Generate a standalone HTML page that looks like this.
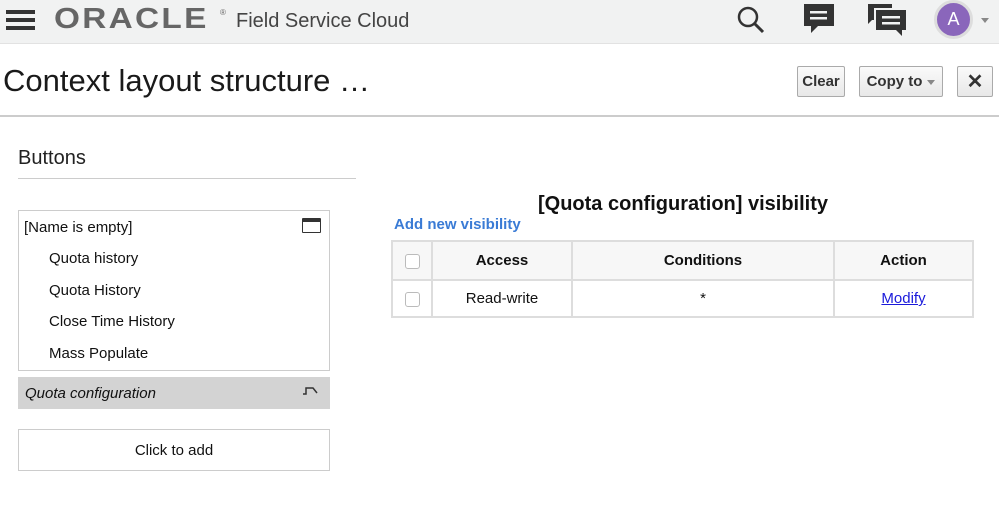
<!DOCTYPE html>
<html><head><meta charset="utf-8"><style>
*{margin:0;padding:0;box-sizing:border-box}
body{width:999px;height:520px;position:relative;background:#fff;font-family:"Liberation Sans",Arial,sans-serif;color:#111;overflow:hidden}
.a{position:absolute}
.hdr{left:0;top:0;width:999px;height:44px;background:#f1f2f2;border-bottom:1px solid #e2e2e2}
.btn{border:1px solid #aaa;border-radius:2px;background:linear-gradient(#fafafa,#e8e8e8);font-weight:bold;font-size:15px;color:#333;display:flex;align-items:center;justify-content:center}
.row{left:49px;font-size:15px}
table{border-collapse:collapse;font-size:15px}
td,th{border:2px solid #ddd;text-align:center}
th{background:#f7f7f7;height:39px}
td{height:37px}
.cb{display:inline-block;width:15px;height:15px;border:1px solid #bbb;border-radius:3px;background:#fff;vertical-align:middle}
</style></head><body>
<div class="a hdr"></div>
<div class="a" style="left:6px;top:10px;width:29px;height:4px;background:#333;box-shadow:0 8px 0 #333,0 16px 0 #333"></div>
<div class="a" style="left:54px;top:4px;font-size:29px;letter-spacing:2px;color:#666;font-weight:bold;transform:scaleX(1.15);transform-origin:left;line-height:30px">ORACLE</div>
<div class="a" style="left:220px;top:8px;font-size:8px;color:#666">®</div>
<div class="a" style="left:236px;top:10px;font-size:20px;color:#444">Field Service Cloud</div>
<svg class="a" style="left:735px;top:4px" width="32" height="32" viewBox="0 0 32 32"><circle cx="13" cy="13" r="9" fill="none" stroke="#333" stroke-width="2.5"/><line x1="19.5" y1="19.5" x2="28" y2="28" stroke="#333" stroke-width="3"/></svg>
<svg class="a" style="left:802px;top:2px" width="34" height="34" viewBox="0 0 34 34"><path d="M2 2h30v22H16l-7 7v-7H2z" fill="#333"/><rect x="8" y="9" width="17" height="2.5" fill="#f1f2f2"/><rect x="8" y="15" width="17" height="2.5" fill="#f1f2f2"/></svg>
<svg class="a" style="left:866px;top:2px" width="42" height="36" viewBox="0 0 42 36"><path d="M2 2h24v4H8v12H6l-4 4z" fill="#333"/><path d="M10 8h30v20h-4v6l-6-6H10z" fill="#333"/><rect x="16" y="14" width="18" height="2.5" fill="#f1f2f2"/><rect x="16" y="20" width="18" height="2.5" fill="#f1f2f2"/></svg>
<div class="a" style="left:934px;top:0px;width:39px;height:39px;border-radius:50%;background:#8a66bb;border:3px solid #ddd;color:#fff;font-size:18px;display:flex;align-items:center;justify-content:center">A</div>
<div class="a" style="left:981px;top:18px;border:4px solid transparent;border-top:5px solid #888"></div>
<div class="a" style="left:3px;top:63px;font-size:31px;color:#1a1a1a">Context layout structure …</div>
<div class="a btn" style="left:797px;top:66px;width:48px;height:31px">Clear</div>
<div class="a btn" style="left:859px;top:66px;width:84px;height:31px">Copy to <span style="display:inline-block;margin-left:5px;border:4px solid transparent;border-top:5px solid #888;margin-top:5px"></span></div>
<div class="a btn" style="left:957px;top:66px;width:36px;height:31px;font-size:20px">✕</div>
<div class="a" style="left:0;top:115px;width:999px;height:2px;background:#ccc"></div>
<div class="a" style="left:18px;top:147px;font-size:20px;color:#222">Buttons</div>
<div class="a" style="left:18px;top:178px;width:338px;height:1px;background:#ccc"></div>
<div class="a" style="left:18px;top:210px;width:312px;height:161px;border:1px solid #ccc"></div>
<div class="a" style="left:24px;top:219px;font-size:15px">[Name is empty]</div>
<div class="a" style="left:302px;top:218px;width:19px;height:15px;border:1.5px solid #333;border-top-width:4px;border-radius:1px"></div>
<div class="a row" style="top:250px">Quota history</div>
<div class="a row" style="top:282px">Quota History</div>
<div class="a row" style="top:313px">Close Time History</div>
<div class="a row" style="top:345px">Mass Populate</div>
<div class="a" style="left:18px;top:377px;width:312px;height:32px;background:#d3d3d3"></div>
<div class="a" style="left:25px;top:385px;font-size:15px;font-style:italic">Quota configuration</div>
<svg class="a" style="left:302px;top:386px" width="18" height="10" viewBox="0 0 18 10"><path d="M1 8h3V2h7l4 5" fill="none" stroke="#333" stroke-width="1.5"/></svg>
<div class="a" style="left:18px;top:429px;width:312px;height:42px;border:1px solid #ccc;font-size:15px;display:flex;align-items:center;justify-content:center">Click to add</div>
<div class="a" style="left:392px;top:193px;width:582px;text-align:center;font-size:20px;font-weight:bold">[Quota configuration] visibility</div>
<div class="a" style="left:394px;top:216px;font-size:15px;font-weight:bold;color:#3a7bd5">Add new visibility</div>
<table class="a" style="left:391px;top:240px;width:583px">
<tr><th style="width:40px"><span class="cb"></span></th><th style="width:140px">Access</th><th style="width:262px">Conditions</th><th>Action</th></tr>
<tr><td><span class="cb"></span></td><td>Read-write</td><td>*</td><td><span style="color:#1a1adb;text-decoration:underline">Modify</span></td></tr>
</table>
</body></html>
